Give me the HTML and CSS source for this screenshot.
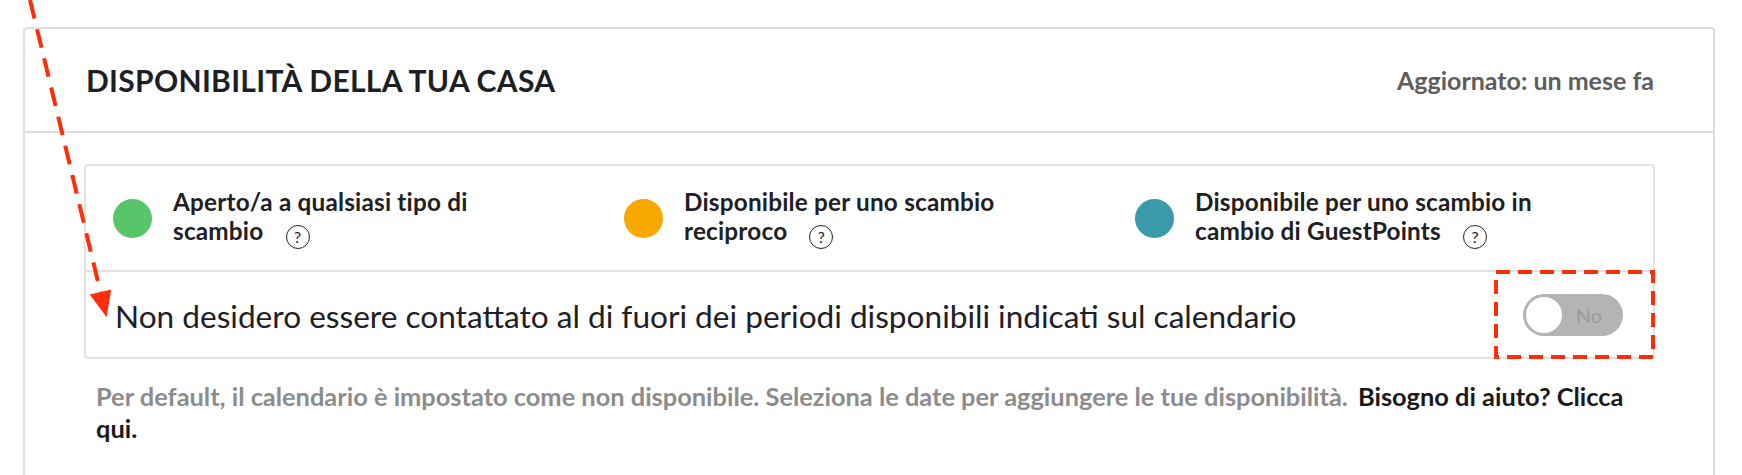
FILE: index.html
```html
<!DOCTYPE html>
<html lang="it">
<head>
<meta charset="utf-8">
<title>Disponibilità della tua casa</title>
<link rel="stylesheet" href="styles.css">
</head>
<body>
<div class="card">
  <div class="card-head">
    <h2 class="title">DISPONIBILITÀ DELLA TUA CASA</h2>
    <span class="updated">Aggiornato: un mese fa</span>
  </div>
  <div class="card-body">
    <div class="panel">
      <div class="legend">
        <div class="legend-item">
          <span class="dot dot-green"></span>
          <span class="legend-text">Aperto/a a qualsiasi tipo di scambio <span class="help" role="img" aria-label="Aiuto"></span></span>
        </div>
        <div class="legend-item">
          <span class="dot dot-orange"></span>
          <span class="legend-text">Disponibile per uno scambio reciproco <span class="help" role="img" aria-label="Aiuto"></span></span>
        </div>
        <div class="legend-item">
          <span class="dot dot-teal"></span>
          <span class="legend-text">Disponibile per uno scambio in cambio di GuestPoints <span class="help" role="img" aria-label="Aiuto"></span></span>
        </div>
      </div>
      <div class="row">
        <span class="row-text">Non desidero essere contattato al di fuori dei periodi disponibili indicati sul calendario</span>
        <div class="toggle-cell">
          <div class="toggle"><span class="knob"></span><span class="toggle-label">No</span></div>
          <svg class="annot-box" viewBox="0 0 161 89" preserveAspectRatio="none">
            <rect x="2" y="2" width="157" height="85" fill="none" stroke="#ff2d0a" stroke-width="4" stroke-dasharray="14 8"/>
          </svg>
        </div>
      </div>
    </div>
    <p class="note">Per default, il calendario è impostato come non disponibile. Seleziona le date per aggiungere le tue disponibilità. <a class="help-link" href="#">Bisogno di aiuto? Clicca</a> <a class="help-link" href="#">qui.</a></p>
  </div>
</div>
<svg class="annot-arrow" width="140" height="340" viewBox="0 0 140 340">
  <line x1="30" y1="0" x2="100.5" y2="292" stroke="#ff2d0a" stroke-width="4" stroke-dasharray="19 11"/>
  <polygon points="106.6,317.3 111.2,289.4 89.8,294.6" fill="#ff2d0a"/>
</svg>
</body>
</html>
```
FILE: styles.css
```css
html, body {
  margin: 0;
  padding: 0;
  background: #ffffff;
  overflow: hidden;
}
body {
  font-family: Lato, "Liberation Sans", Arial, sans-serif;
  color: #1d2024;
  position: relative;
  height: 475px;
}
.card {
  margin: 27px 0 0 23px;
  width: 1688px;
  height: 600px;
  border: 2px solid #dedede;
  border-radius: 4px;
}
.card-head {
  height: 102px;
  border-bottom: 2px solid #dedede;
  display: flex;
  align-items: center;
  justify-content: space-between;
  padding: 0 59px 0 61px;
}
.title {
  margin: 0;
  font-size: 30px;
  font-weight: 700;
  letter-spacing: 0.3px;
  color: #1c1f23;
}
.updated {
  font-size: 25px;
  font-weight: 700;
  color: #5e5e5e;
}
.card-body {
  padding: 31px 58px 0 59px;
}
.panel {
  border: 2px solid #e2e2e2;
  border-radius: 4px;
}
.legend {
  display: grid;
  grid-template-columns: 511px 511px 511px;
  padding-left: 27px;
  height: 104px;
  align-items: center;
  border-bottom: 2px solid #e2e2e2;
}
.legend-item {
  display: flex;
  align-items: center;
  gap: 21px;
}
.dot {
  flex: none;
  width: 39px;
  height: 39px;
  border-radius: 50%;
}
.dot-green { background: #59c56a; }
.dot-orange { background: #f7a900; }
.dot-teal { background: #3a9aaa; }
.legend-text {
  font-size: 24.3px;
  font-weight: 700;
  letter-spacing: 0.2px;
  line-height: 29px;
  max-width: 390px;
  color: #1d2024;
}
.help {
  display: inline-flex;
  align-items: center;
  justify-content: center;
  box-sizing: border-box;
  width: 24px;
  height: 24px;
  border: 1.5px solid #222;
  border-radius: 50%;
  margin-left: 16px;
  vertical-align: -3px;
}
.help::before {
  content: "?";
  font-size: 16px;
  font-weight: 400;
  letter-spacing: 0;
  line-height: 1;
  color: #222;
}
.row {
  height: 85px;
  display: flex;
  align-items: stretch;
  justify-content: space-between;
  padding-left: 29px;
}
.row-text {
  align-self: center;
  font-size: 31.6px;
  font-weight: 400;
  color: #1d2024;
  padding-top: 2px;
}
.toggle-cell {
  position: relative;
  width: 161px;
  display: flex;
  align-items: center;
  justify-content: center;
  margin-right: -2px;
}
.toggle {
  position: relative;
  width: 100px;
  height: 42px;
  border-radius: 21px;
  background: #b4b4b4;
  display: flex;
  align-items: center;
  justify-content: flex-end;
  padding-right: 21px;
  box-sizing: border-box;
  margin-left: -3px;
}
.knob {
  position: absolute;
  left: 3px;
  top: 3px;
  width: 36px;
  height: 36px;
  border-radius: 50%;
  background: #ffffff;
}
.toggle-label {
  font-size: 20px;
  color: #9b9b9b;
}
.annot-box {
  position: absolute;
  left: 0;
  top: -2px;
  width: 161px;
  height: 89px;
}
.note {
  margin: 21px 0 0;
  padding: 0 20px 0 12px;
  font-size: 25.4px;
  font-weight: 700;
  line-height: 32px;
  color: #8c8c8c;
}
.help-link {
  color: #1a1a1a;
  text-decoration: none;
}
.help-link:first-child {
  margin-left: 4px;
}
.annot-arrow {
  position: absolute;
  left: 0;
  top: 0;
}
```
